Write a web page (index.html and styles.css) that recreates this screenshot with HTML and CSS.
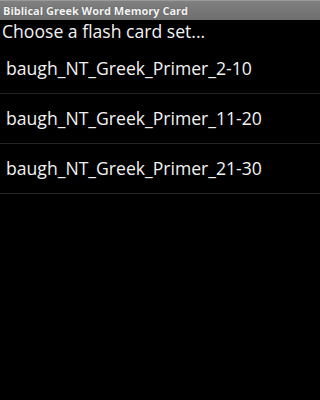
FILE: index.html
```
<!DOCTYPE html>
<html>
<head>
<meta charset="utf-8">
<link rel="stylesheet" href="styles.css">
</head>
<body>
<div class="titlebar">Biblical Greek Word Memory Card</div>
<div class="prompt">Choose a flash card set...</div>
<ul class="sets">
  <li class="set">baugh_NT_Greek_Primer_2-10</li>
  <li class="set">baugh_NT_Greek_Primer_11-20</li>
  <li class="set">baugh_NT_Greek_Primer_21-30</li>
</ul>
</body>
</html>
```
FILE: styles.css
```
html, body {
  margin: 0;
  padding: 0;
  background: #000;
  height: 100%;
}
body {
  font-family: "Open Sans", "DejaVu Sans", sans-serif;
  color: #f2f2f2;
}
.titlebar {
  height: 19px;
  border-top: 1px solid #9a9a9a;
  background: linear-gradient(#808080, #6e6e6e);
  color: #f4f4f4;
  font-weight: bold;
  font-size: 11px;
  line-height: 19px;
  padding-left: 3px;
  white-space: nowrap;
  text-shadow: 0 0 1px #444;
}
.prompt {
  height: 24px;
  font-size: 17.6px;
  line-height: 22px;
  padding-left: 2px;
  white-space: nowrap;
}
.sets {
  list-style: none;
  margin: 0;
  padding: 0;
}
.set {
  height: 49px;
  line-height: 49px;
  border-bottom: 1px solid #242424;
  font-size: 17.6px;
  padding-left: 6px;
  white-space: nowrap;
}
```
